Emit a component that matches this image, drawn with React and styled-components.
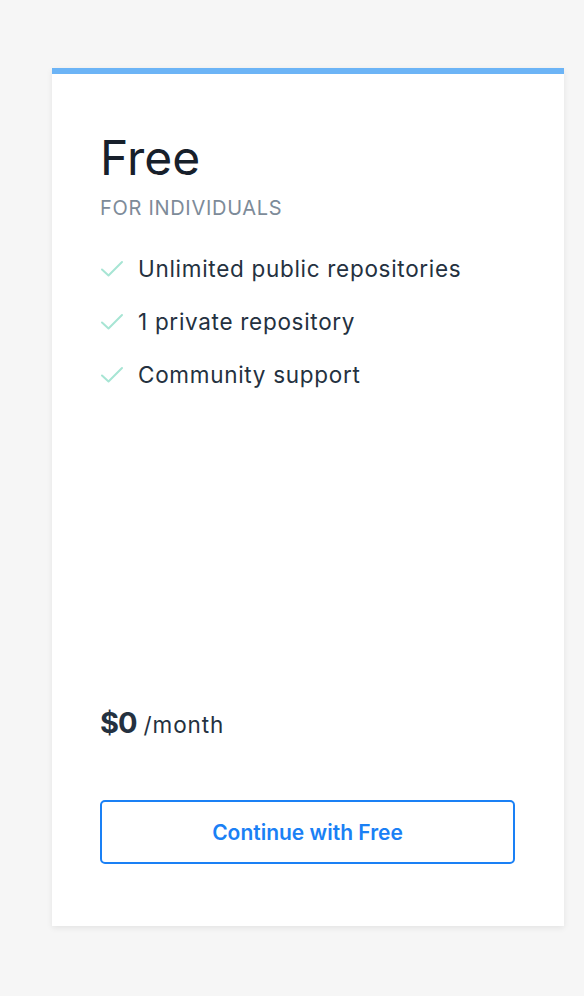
import React from "react";
import styled, { createGlobalStyle } from "styled-components";

const GlobalStyle = createGlobalStyle`
  html, body {
    margin: 0;
    padding: 0;
    background: #f6f6f6;
    font-family: Inter, "Noto Sans", sans-serif;
  }
`;

const Page = styled.div`
  padding: 68px 20px 70px 52px;
`;

const Card = styled.div`
  width: 512px;
  height: 858px;
  box-sizing: border-box;
  background: #fff;
  border-top: 6px solid #6cb4f6;
  box-shadow: 0 2px 6px rgba(0, 0, 0, 0.08);
  padding: 56px 49px 62px 48px;
  display: flex;
  flex-direction: column;
`;

const Title = styled.h1`
  margin: 0;
  font-size: 48px;
  line-height: 56px;
  font-weight: 400;
  color: #17202b;
`;

const Subtitle = styled.div`
  margin-top: 10px;
  font-size: 20px;
  line-height: 24px;
  letter-spacing: 0.7px;
  color: #7d8b99;
`;

const Features = styled.ul`
  list-style: none;
  margin: 35px 0 0;
  padding: 0;
  display: flex;
  flex-direction: column;
  gap: 25px;
`;

const Feature = styled.li`
  display: flex;
  align-items: center;
  gap: 14px;
  font-size: 22.5px;
  line-height: 28px;
  letter-spacing: 0.7px;
  color: #243140;
`;

const Spacer = styled.div`
  flex: 1;
`;

const Price = styled.div`
  display: flex;
  align-items: baseline;
  gap: 7px;
  color: #243140;
`;

const Amount = styled.span`
  font-size: 29px;
  font-weight: 700;
  letter-spacing: -1px;
`;

const Period = styled.span`
  font-size: 22.5px;
  letter-spacing: 0.9px;
`;

const Button = styled.button`
  margin-top: 60px;
  height: 64px;
  width: 100%;
  background: #fff;
  border: 2px solid #1a80f5;
  border-radius: 5px;
  color: #1a80f5;
  font-family: inherit;
  font-size: 21px;
  font-weight: 600;
  cursor: pointer;
`;

const Check = () => (
  <svg width="24" height="20" viewBox="0 0 24 20" fill="none">
    <path d="M2 10.5 L8.5 16.5 L22 3" stroke="#a7e5d4" strokeWidth="2" strokeLinecap="round" strokeLinejoin="round" />
  </svg>
);

const features = ["Unlimited public repositories", "1 private repository", "Community support"];

export default function App() {
  return (
    <Page>
      <GlobalStyle />
      <Card>
        <Title>Free</Title>
        <Subtitle>FOR INDIVIDUALS</Subtitle>
        <Features>
          {features.map((f) => (
            <Feature key={f}>
              <Check />
              {f}
            </Feature>
          ))}
        </Features>
        <Spacer />
        <Price>
          <Amount>$0</Amount>
          <Period>/month</Period>
        </Price>
        <Button>Continue with Free</Button>
      </Card>
    </Page>
  );
}
